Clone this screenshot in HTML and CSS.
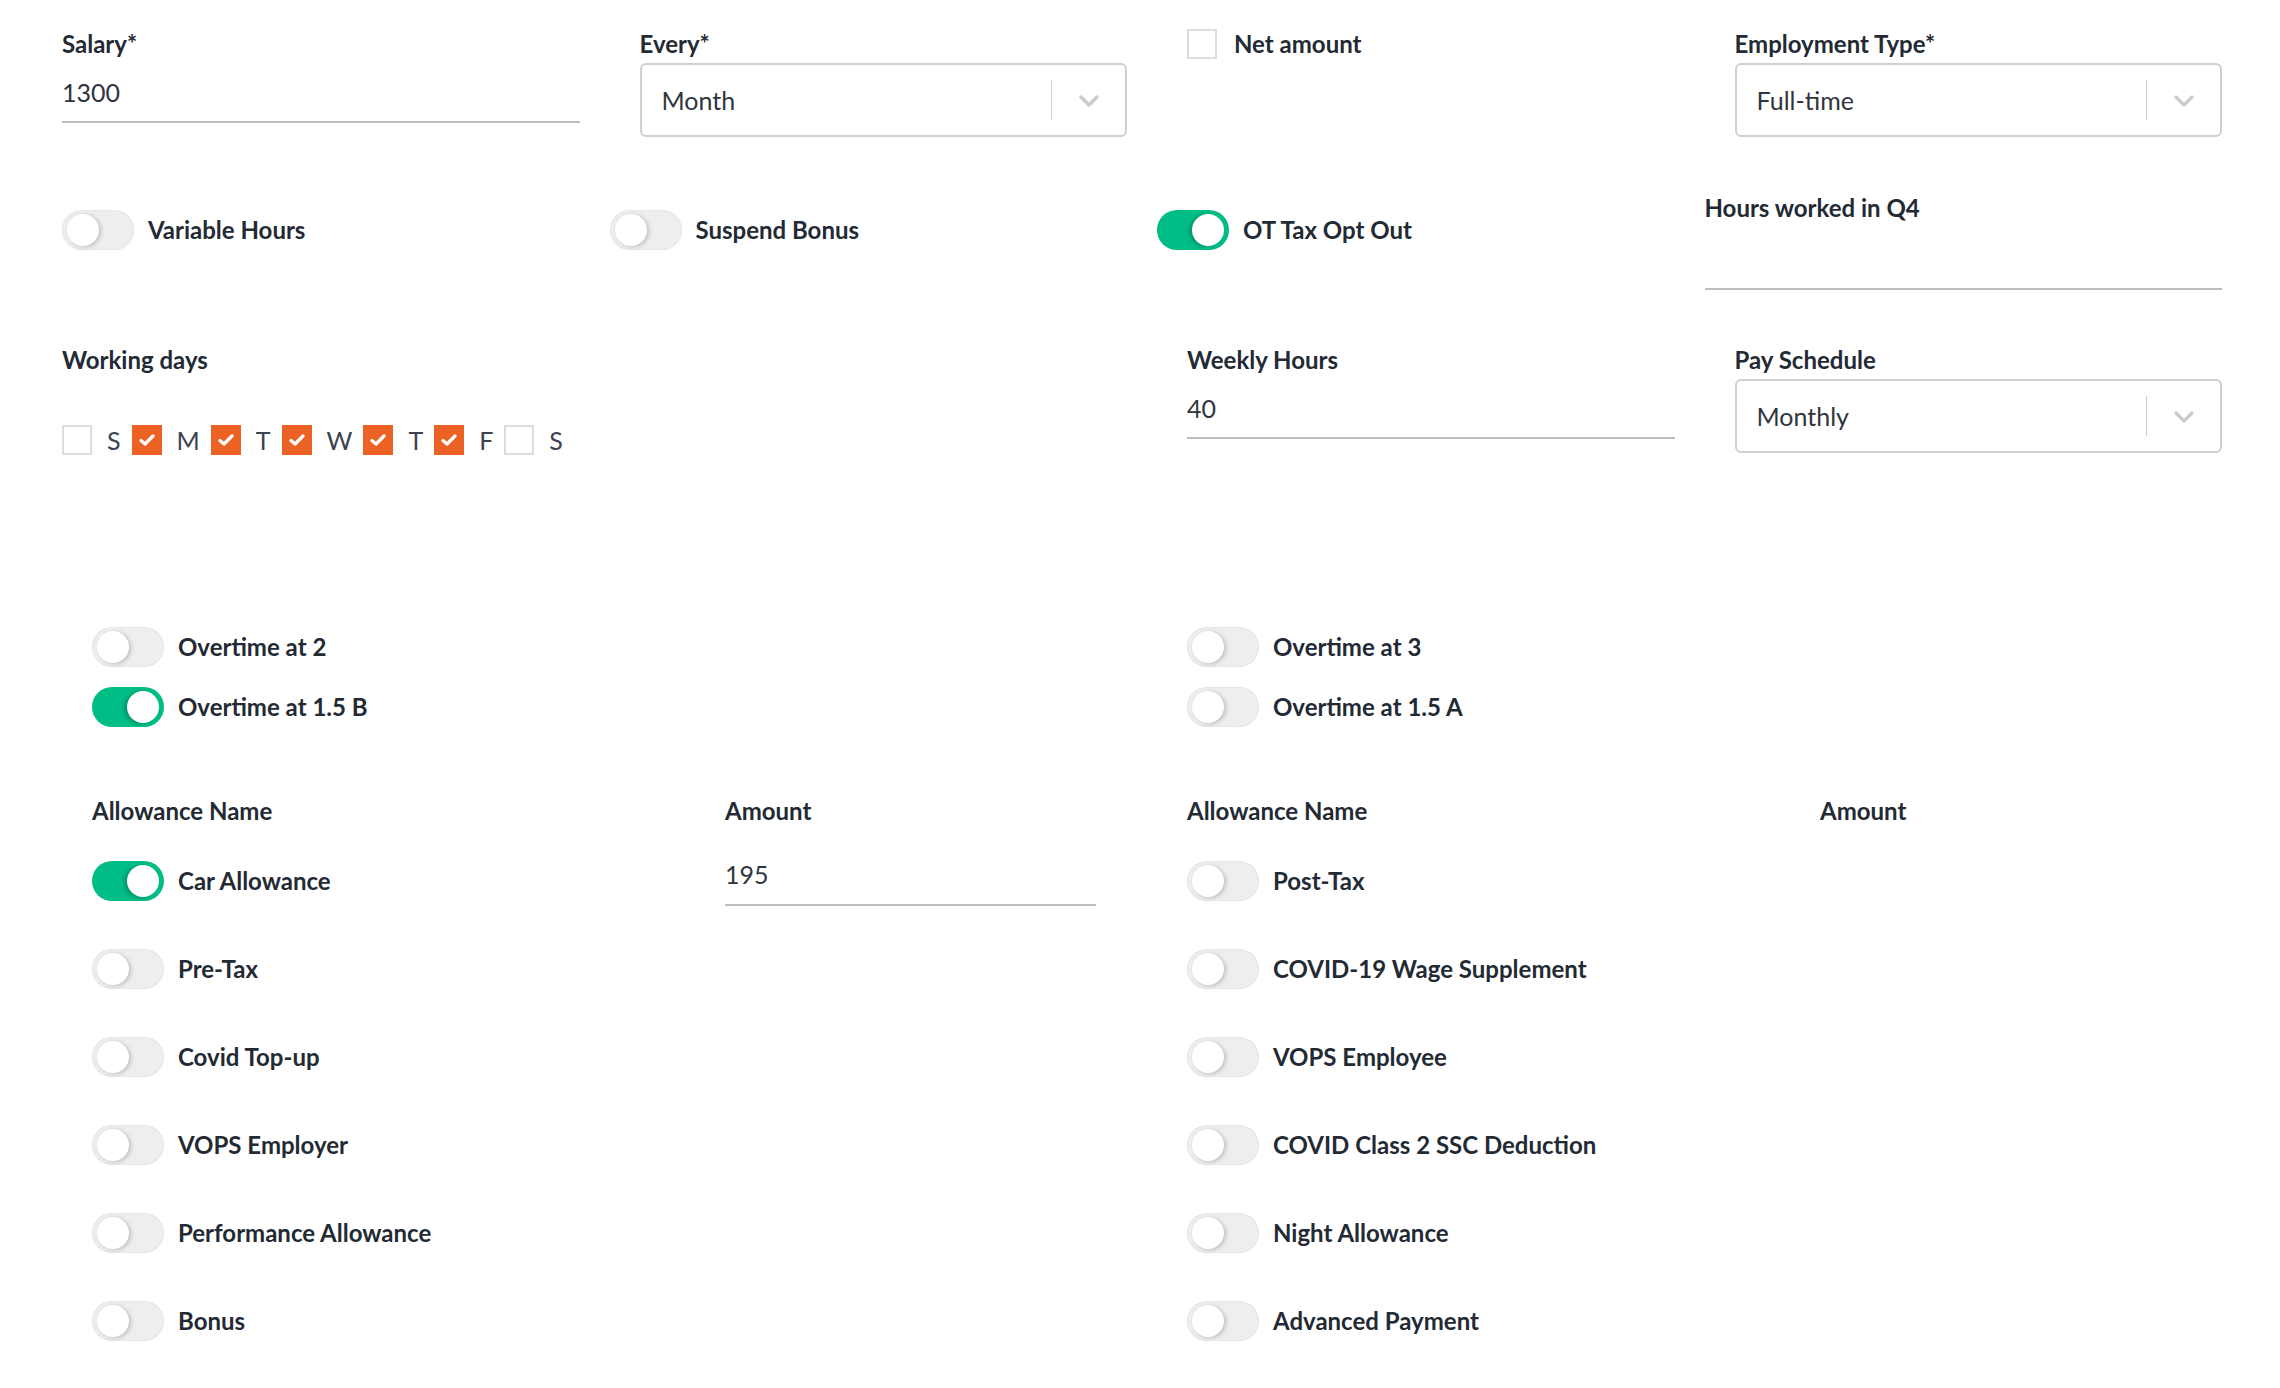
FILE: index.html
```html
<!DOCTYPE html>
<html lang="en">
<head>
    <meta charset="UTF-8">
    <meta name="viewport" content="width=device-width, initial-scale=1.0">
    <title>Employee Pay Settings</title>
    <link rel="stylesheet" href="styles.css">
</head>
<body>
    <div class="page">
        <!-- row 1 -->
        <div class="grid row-top">
            <div class="field">
                <label class="label">Salary*</label>
                <div class="line-input">1300</div>
            </div>
            <div class="field indent">
                <label class="label">Every*</label>
                <div class="select">
                    <span class="select-value">Month</span>
                    <span class="select-sep"></span>
                    <svg class="chevron" width="22" height="14" viewBox="0 0 22 14"><polyline points="3,3 11,11 19,3" fill="none" stroke="#cccccc" stroke-width="3.5" stroke-linecap="round" stroke-linejoin="round"/></svg>
                </div>
            </div>
            <div class="field indent">
                <div class="check-line">
                    <span class="box"></span>
                    <span class="label">Net amount</span>
                </div>
            </div>
            <div class="field indent">
                <label class="label">Employment Type*</label>
                <div class="select">
                    <span class="select-value">Full-time</span>
                    <span class="select-sep"></span>
                    <svg class="chevron" width="22" height="14" viewBox="0 0 22 14"><polyline points="3,3 11,11 19,3" fill="none" stroke="#cccccc" stroke-width="3.5" stroke-linecap="round" stroke-linejoin="round"/></svg>
                </div>
            </div>
        </div>

        <!-- row 2 -->
        <div class="grid row-mid">
            <div class="toggle-cell">
                <span class="switch"><span class="knob"></span></span>
                <span class="label">Variable Hours</span>
            </div>
            <div class="toggle-cell">
                <span class="switch"><span class="knob"></span></span>
                <span class="label">Suspend Bonus</span>
            </div>
            <div class="toggle-cell">
                <span class="switch on"><span class="knob"></span></span>
                <span class="label">OT Tax Opt Out</span>
            </div>
            <div class="field">
                <label class="label">Hours worked in Q4</label>
                <div class="line-input tall"></div>
            </div>
        </div>

        <!-- row 3 -->
        <div class="grid row-days">
            <div class="field span2">
                <label class="label">Working days</label>
                <div class="days">
                    <span class="box"></span><span class="day">S</span>
                    <span class="box checked"><svg width="16" height="14" viewBox="0 0 16 14"><polyline points="2,7.5 6,11 14,3" fill="none" stroke="#fff" stroke-width="3.2" stroke-linecap="round" stroke-linejoin="round"/></svg></span><span class="day">M</span>
                    <span class="box checked"><svg width="16" height="14" viewBox="0 0 16 14"><polyline points="2,7.5 6,11 14,3" fill="none" stroke="#fff" stroke-width="3.2" stroke-linecap="round" stroke-linejoin="round"/></svg></span><span class="day">T</span>
                    <span class="box checked"><svg width="16" height="14" viewBox="0 0 16 14"><polyline points="2,7.5 6,11 14,3" fill="none" stroke="#fff" stroke-width="3.2" stroke-linecap="round" stroke-linejoin="round"/></svg></span><span class="day">W</span>
                    <span class="box checked"><svg width="16" height="14" viewBox="0 0 16 14"><polyline points="2,7.5 6,11 14,3" fill="none" stroke="#fff" stroke-width="3.2" stroke-linecap="round" stroke-linejoin="round"/></svg></span><span class="day">T</span>
                    <span class="box checked"><svg width="16" height="14" viewBox="0 0 16 14"><polyline points="2,7.5 6,11 14,3" fill="none" stroke="#fff" stroke-width="3.2" stroke-linecap="round" stroke-linejoin="round"/></svg></span><span class="day">F</span>
                    <span class="box"></span><span class="day">S</span>
                </div>
            </div>
            <div class="field indent">
                <label class="label">Weekly Hours</label>
                <div class="line-input">40</div>
            </div>
            <div class="field indent">
                <label class="label">Pay Schedule</label>
                <div class="select">
                    <span class="select-value">Monthly</span>
                    <span class="select-sep"></span>
                    <svg class="chevron" width="22" height="14" viewBox="0 0 22 14"><polyline points="3,3 11,11 19,3" fill="none" stroke="#cccccc" stroke-width="3.5" stroke-linecap="round" stroke-linejoin="round"/></svg>
                </div>
            </div>
        </div>

        <!-- overtime + allowances -->
        <div class="halves">
            <div class="half">
                <div class="overtime">
                    <div class="toggle-cell">
                        <span class="switch"><span class="knob"></span></span>
                        <span class="label">Overtime at 2</span>
                    </div>
                    <div class="toggle-cell">
                        <span class="switch on"><span class="knob"></span></span>
                        <span class="label">Overtime at 1.5 B</span>
                    </div>
                </div>
                <div class="allow-head">
                    <span class="label">Allowance Name</span>
                    <span class="label">Amount</span>
                </div>
                <div class="allow-list">
                    <div class="allow-row">
                        <div class="toggle-cell">
                            <span class="switch on"><span class="knob"></span></span>
                            <span class="label">Car Allowance</span>
                        </div>
                        <div class="line-input amount">195</div>
                    </div>
                    <div class="allow-row">
                        <div class="toggle-cell">
                            <span class="switch"><span class="knob"></span></span>
                            <span class="label">Pre-Tax</span>
                        </div>
                    </div>
                    <div class="allow-row">
                        <div class="toggle-cell">
                            <span class="switch"><span class="knob"></span></span>
                            <span class="label">Covid Top-up</span>
                        </div>
                    </div>
                    <div class="allow-row">
                        <div class="toggle-cell">
                            <span class="switch"><span class="knob"></span></span>
                            <span class="label">VOPS Employer</span>
                        </div>
                    </div>
                    <div class="allow-row">
                        <div class="toggle-cell">
                            <span class="switch"><span class="knob"></span></span>
                            <span class="label">Performance Allowance</span>
                        </div>
                    </div>
                    <div class="allow-row">
                        <div class="toggle-cell">
                            <span class="switch"><span class="knob"></span></span>
                            <span class="label">Bonus</span>
                        </div>
                    </div>
                </div>
            </div>

            <div class="half">
                <div class="overtime">
                    <div class="toggle-cell">
                        <span class="switch"><span class="knob"></span></span>
                        <span class="label">Overtime at 3</span>
                    </div>
                    <div class="toggle-cell">
                        <span class="switch"><span class="knob"></span></span>
                        <span class="label">Overtime at 1.5 A</span>
                    </div>
                </div>
                <div class="allow-head">
                    <span class="label">Allowance Name</span>
                    <span class="label">Amount</span>
                </div>
                <div class="allow-list">
                    <div class="allow-row">
                        <div class="toggle-cell">
                            <span class="switch"><span class="knob"></span></span>
                            <span class="label">Post-Tax</span>
                        </div>
                    </div>
                    <div class="allow-row">
                        <div class="toggle-cell">
                            <span class="switch"><span class="knob"></span></span>
                            <span class="label">COVID-19 Wage Supplement</span>
                        </div>
                    </div>
                    <div class="allow-row">
                        <div class="toggle-cell">
                            <span class="switch"><span class="knob"></span></span>
                            <span class="label">VOPS Employee</span>
                        </div>
                    </div>
                    <div class="allow-row">
                        <div class="toggle-cell">
                            <span class="switch"><span class="knob"></span></span>
                            <span class="label">COVID Class 2 SSC Deduction</span>
                        </div>
                    </div>
                    <div class="allow-row">
                        <div class="toggle-cell">
                            <span class="switch"><span class="knob"></span></span>
                            <span class="label">Night Allowance</span>
                        </div>
                    </div>
                    <div class="allow-row">
                        <div class="toggle-cell">
                            <span class="switch"><span class="knob"></span></span>
                            <span class="label">Advanced Payment</span>
                        </div>
                    </div>
                </div>
            </div>
        </div>
    </div>
</body>
</html>
```

FILE: styles.css
```css
body {
    margin: 0;
    background: #fff;
    font-family: Lato, "Open Sans", sans-serif;
    color: #232a34;
}
.page {
    width: 2160px;
    padding: 29px 0 0 62px;
}
.grid {
    display: grid;
    grid-template-columns: repeat(4, 1fr);
    column-gap: 30px;
    align-items: start;
}
.label {
    display: block;
    font-size: 24px;
    font-weight: 700;
    line-height: 30px;
    color: #232a34;
}
.field.indent {
    padding-left: 30px;
}
.span2 {
    grid-column: span 2;
}
.line-input {
    margin-top: 4px;
    height: 58px;
    border-bottom: 2px solid #bdbdbd;
    font-size: 25px;
    line-height: 58px;
    color: #30353d;
}
.line-input.tall {
    height: 61px;
}
.select {
    margin-top: 4px;
    height: 70px;
    border: 2px solid #d0d0d0;
    border-radius: 6px;
    display: flex;
    align-items: center;
    padding-left: 20px;
}
.select-value {
    flex: 1;
    font-size: 25px;
    color: #30353d;
}
.select-sep {
    width: 1px;
    height: 40px;
    background: #cccccc;
}
.chevron {
    margin: 2px 25px 0 26px;
}
.check-line {
    display: flex;
    align-items: center;
    gap: 17px;
}
.box {
    width: 26px;
    height: 26px;
    border: 2px solid #dddddd;
    display: inline-flex;
    align-items: center;
    justify-content: center;
    flex-shrink: 0;
}
.box.checked {
    background: #ec6124;
    border-color: #ec6124;
}

.row-mid {
    margin-top: 56px;
}
.toggle-cell {
    display: flex;
    align-items: center;
    gap: 14px;
}
.row-mid .toggle-cell {
    padding-top: 17px;
}
.switch {
    position: relative;
    width: 72px;
    height: 40px;
    border-radius: 20px;
    background: #eeeeee;
    box-shadow: inset 0 0 0 1px #e6e6e6;
    flex-shrink: 0;
}
.switch .knob {
    position: absolute;
    top: 4px;
    left: 5px;
    width: 32px;
    height: 32px;
    border-radius: 50%;
    background: #fff;
    box-shadow: 2px 1px 4px rgba(0, 0, 0, 0.2);
}
.switch.on {
    background: #00bd86;
    box-shadow: none;
}
.switch.on .knob {
    left: 35px;
    box-shadow: -3px 1px 4px rgba(0, 0, 0, 0.22);
}

.row-days {
    margin-top: 55px;
}
.days {
    margin-top: 50px;
    display: flex;
    align-items: center;
}
.day {
    font-size: 25px;
    color: #3b4250;
    margin: 0 11px 0 15px;
}

.halves {
    margin-top: 172px;
    display: grid;
    grid-template-columns: 1fr 1fr;
    column-gap: 30px;
}
.half {
    padding-left: 30px;
}
.overtime {
    display: flex;
    flex-direction: column;
    gap: 20px;
}
.allow-head {
    margin-top: 69px;
    display: grid;
    grid-template-columns: 633px 1fr;
}
.allow-list {
    margin-top: 35px;
    display: flex;
    flex-direction: column;
    gap: 48px;
}
.allow-row {
    display: grid;
    grid-template-columns: 633px 371px;
    grid-template-rows: 40px;
    height: 40px;
}
.line-input.amount {
    margin-top: -15px;
    height: 58px;
    line-height: 56px;
}
```
